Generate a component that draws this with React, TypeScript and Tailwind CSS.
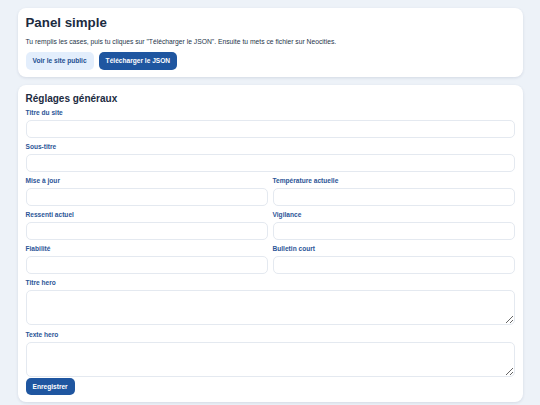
const font = { fontFamily: '"Liberation Sans", Arial, sans-serif' };

function Field({ label, area }: { label: string; area?: boolean }) {
  return (
    <div className="flex flex-col">
      <label className="text-[6.6px] leading-[8px] font-bold text-[#2c5597] mb-[3px]">
        {label}
      </label>
      {area ? (
        <textarea className="block h-[35px] w-full rounded-[5px] border border-[#e4e9f0] bg-white" />
      ) : (
        <input className="block h-[18px] w-full rounded-[5px] border border-[#e4e9f0] bg-white" />
      )}
    </div>
  );
}

export default function App() {
  return (
    <div
      style={font}
      className="min-h-[405px] w-[540px] bg-[#edf2f8] pt-[8px] text-[#1c2b3f]"
    >
      <div className="mx-auto w-[505px] flex flex-col gap-[8px]">
        <section className="rounded-[8px] bg-white px-[8px] pt-[7px] pb-[7px] shadow-[0_1px_3px_rgba(30,50,90,0.12)]">
          <h1 className="text-[13.3px] leading-[16px] font-bold">Panel simple</h1>
          <p className="mt-[6px] text-[6.75px] leading-[10px] text-[#27364a]">
            Tu remplis les cases, puis tu cliques sur "Télécharger le JSON". Ensuite tu mets ce fichier sur Neocities.
          </p>
          <div className="mt-[5px] flex gap-[5px]">
            <button className="h-[18px] rounded-[5px] bg-[#e3eefc] px-[7px] text-[6.6px] font-bold text-[#1e4f91]">
              Voir le site public
            </button>
            <button className="h-[18px] rounded-[5px] bg-[#1f56a0] px-[7px] text-[6.6px] font-bold text-white">
              Télécharger le JSON
            </button>
          </div>
        </section>

        <section className="rounded-[8px] bg-white px-[8px] pt-[8px] pb-[7px] shadow-[0_1px_3px_rgba(30,50,90,0.12)]">
          <h2 className="text-[10px] leading-[12px] font-bold mb-[4px]">Réglages généraux</h2>
          <div className="flex flex-col gap-[5px]">
            <Field label="Titre du site" />
            <Field label="Sous-titre" />
            <div className="grid grid-cols-2 gap-x-[5px] gap-y-[5px]">
              <Field label="Mise à jour" />
              <Field label="Température actuelle" />
              <Field label="Ressenti actuel" />
              <Field label="Vigilance" />
              <Field label="Fiabilité" />
              <Field label="Bulletin court" />
            </div>
            <Field label="Titre hero" area />
            <div className="mt-[1px]">
              <Field label="Texte hero" area />
            </div>
          </div>
          <div className="mt-[1px] flex">
            <button className="h-[17px] rounded-[5px] bg-[#1f56a0] px-[7px] text-[6.6px] font-bold text-white">
              Enregistrer
            </button>
          </div>
        </section>
      </div>
    </div>
  );
}
